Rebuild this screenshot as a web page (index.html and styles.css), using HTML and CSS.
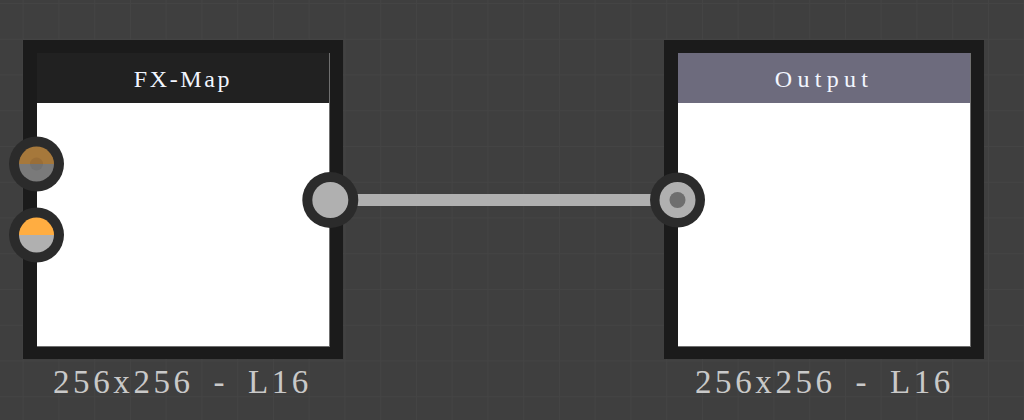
FILE: index.html
```html
<!DOCTYPE html>
<html>
<head>
<meta charset="utf-8">
<link rel="stylesheet" href="styles.css">
</head>
<body>
<div class="canvas">
  <div class="node node-fx">
    <div class="frame">
      <div class="inner">
        <div class="header header-fx"><span class="title title-fx">FX-Map</span></div>
        <div class="preview"></div>
      </div>
    </div>
    <div class="label">256x256 - L16</div>
  </div>

  <div class="node node-out">
    <div class="frame">
      <div class="inner">
        <div class="header header-out"><span class="title title-out">Output</span></div>
        <div class="preview"></div>
      </div>
    </div>
    <div class="label">256x256 - L16</div>
  </div>

  <svg class="links" width="1024" height="420" viewBox="0 0 1024 420">
    <rect x="356" y="194" width="296" height="12" fill="#b0b0b0"/>
    <!-- FX-Map input 1 (dimmed, connected dot) -->
    <g>
      <circle cx="36.5" cy="164" r="27.5" fill="#2b2b2b"/>
      <clipPath id="c1"><circle cx="36.5" cy="164" r="17.5"/></clipPath>
      <g clip-path="url(#c1)">
        <rect x="18" y="146" width="38" height="18" fill="#a6783b"/>
        <rect x="18" y="164" width="38" height="18" fill="#7a7a7a"/>
      </g>
      <clipPath id="c1d"><circle cx="36.5" cy="164" r="6.5"/></clipPath>
      <g clip-path="url(#c1d)">
        <rect x="29" y="157" width="16" height="7" fill="#9a6e37"/>
        <rect x="29" y="164" width="16" height="7" fill="#727272"/>
      </g>
    </g>
    <!-- FX-Map input 2 -->
    <g>
      <circle cx="36.5" cy="235" r="27.5" fill="#2b2b2b"/>
      <clipPath id="c2"><circle cx="36.5" cy="235" r="17.5"/></clipPath>
      <g clip-path="url(#c2)">
        <rect x="18" y="217" width="38" height="18" fill="#ffad41"/>
        <rect x="18" y="235" width="38" height="18" fill="#b0b0b0"/>
      </g>
    </g>
    <!-- FX-Map output -->
    <circle cx="330.3" cy="200" r="28" fill="#2b2b2b"/>
    <circle cx="330.3" cy="200" r="18" fill="#b0b0b0"/>
    <!-- Output input -->
    <circle cx="677.5" cy="200" r="27.5" fill="#2b2b2b"/>
    <circle cx="677.5" cy="200" r="18" fill="#b0b0b0"/>
    <circle cx="677.5" cy="200" r="8" fill="#6e6e6e"/>
  </svg>
</div>
</body>
</html>
```

FILE: styles.css
```css
html, body {
  margin: 0;
  padding: 0;
}

body {
  width: 1024px;
  height: 420px;
  overflow: hidden;
  background-color: #3f3f3f;
  background-image:
    linear-gradient(to right, #444444 1px, transparent 1px),
    linear-gradient(to bottom, #444444 1px, transparent 1px);
  background-size: 35.75px 35.75px;
  background-position: 22.7px 3px;
  font-family: "Liberation Serif", "DejaVu Serif", serif;
}

.canvas {
  position: relative;
  width: 1024px;
  height: 420px;
}

.node {
  position: absolute;
  top: 40px;
  width: 320px;
}

.node-fx { left: 23px; }
.node-out { left: 664px; }

.frame {
  background: #1b1b1b;
  padding: 13px 13px 12px 14px;
}

.inner {
  display: flex;
  flex-direction: column;
  height: 293px;
  border-right: 1px solid #6f6f6f;
  border-bottom: 1px solid #6f6f6f;
}

.header {
  height: 48px;
  padding-top: 2px;
  line-height: 48px;
  text-align: center;
  flex: none;
}

.header-fx { background: #212121; }
.header-out { background: #6d6b7d; }

.title {
  color: #f2f6ff;
  font-size: 24px;
}

.title-fx { letter-spacing: 2.6px; }
.title-out { letter-spacing: 5.3px; }

.preview {
  flex: 1;
  background: #ffffff;
}

.label {
  margin-top: 7px;
  padding-left: 30px;
  font-size: 33px;
  line-height: 33px;
  letter-spacing: 3.6px;
  word-spacing: 8px;
  color: #c9c9c9;
  white-space: nowrap;
}

.node-out .label { padding-left: 31px; }

.links {
  position: absolute;
  left: 0;
  top: 0;
}
```
